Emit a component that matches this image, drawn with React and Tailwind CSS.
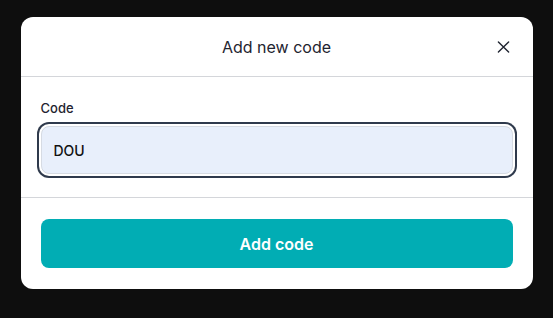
import React from 'react';

const App = () => {
  return (
    <div
      className="min-h-screen w-full bg-[#0e0e0e] pt-[17px]"
      style={{ fontFamily: 'Inter, "Noto Sans", sans-serif' }}
    >
      <div className="mx-auto w-[512px] rounded-[12px] bg-white">
        <div className="relative flex h-[60px] items-center justify-center border-b border-[#d4d6da]">
          <h2 className="text-[16px] font-normal text-[#1f2430]">Add new code</h2>
          <button className="absolute right-[23px] top-1/2 -translate-y-1/2 text-[#1f2430]">
            <svg width="13" height="13" viewBox="0 0 14 14" fill="none">
              <path d="M1.5 1.5L12.5 12.5M12.5 1.5L1.5 12.5" stroke="currentColor" strokeWidth="1.5" strokeLinecap="round" />
            </svg>
          </button>
        </div>

        <div className="border-b border-[#d4d6da] px-5 pb-[23px] pt-[21px]">
          <label className="block h-5 text-[13px] font-medium leading-5 text-[#1f2430]">Code</label>
          <input
            type="text"
            defaultValue="DOU"
            className="mt-[8px] h-[48px] w-full rounded-[8px] border border-[#d6dbe3] bg-[#e8effb] px-3 text-[14px] font-medium text-[#111] outline-none ring-2 ring-[#2f3a4c] ring-offset-2"
          />
        </div>

        <div className="px-5 pb-[21px] pt-[21px]">
          <button className="flex h-[49px] w-full items-center justify-center rounded-[8px] bg-[#01adb4] text-[16px] font-semibold text-white">
            Add code
          </button>
        </div>
      </div>
    </div>
  );
};

export default App;
